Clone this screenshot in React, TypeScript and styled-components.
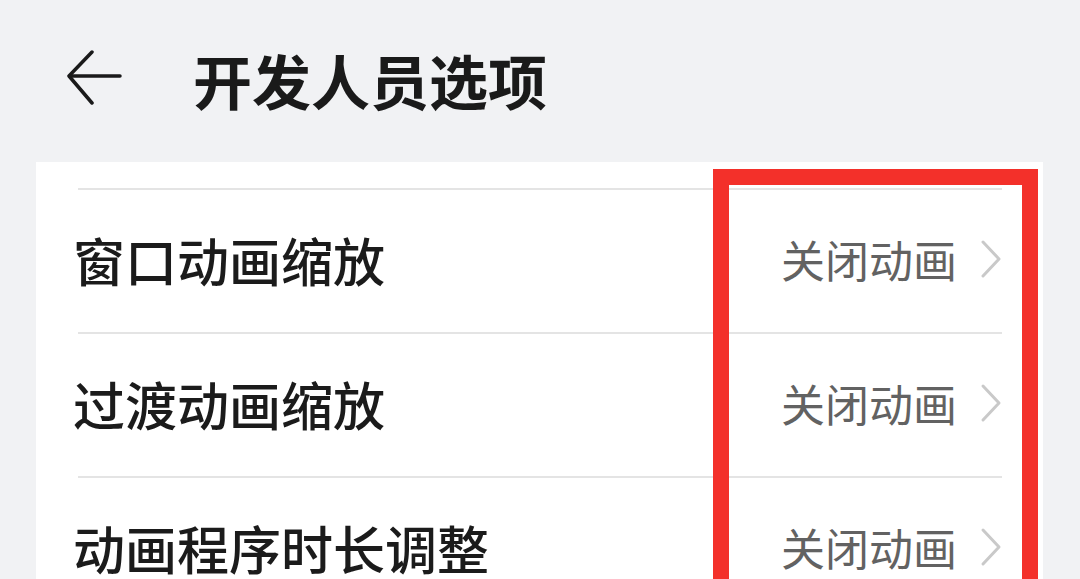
import { FC } from 'react'
import styled, { createGlobalStyle } from 'styled-components'

const GlobalStyle = createGlobalStyle`
  html, body {
    margin: 0;
    padding: 0;
    background: #f1f2f4;
  }
  body {
    font-family: "Noto Sans CJK SC", "Noto Sans", sans-serif;
  }
`

const Page = styled.div`
  position: relative;
  width: 1080px;
  height: 579px;
  overflow: hidden;
  background: #f1f2f4;
`

const Header = styled.header`
  height: 162px;
  display: flex;
  align-items: center;
  padding-left: 67px;
  box-sizing: border-box;
`

const BackButton = styled.svg`
  width: 56px;
  height: 60px;
  flex-shrink: 0;
  margin-top: -2px;
`

const Title = styled.h1`
  margin: -4px 0 0 70px;
  font-size: 59px;
  font-weight: 700;
  line-height: 1;
  color: #1a1a1a;
`

const Card = styled.section`
  margin: 0 37px 0 36px;
  padding: 26px 41px 0 42px;
  background: #fff;
`

const Row = styled.div`
  height: 144px;
  display: flex;
  align-items: center;
  border-top: 2px solid #e4e4e4;
  box-sizing: border-box;
`

const Label = styled.span`
  flex: 1;
  margin-left: -5px;
  margin-top: -2px;
  font-size: 52px;
  font-weight: 500;
  color: #1b1b1b;
  line-height: 1;
`

const Value = styled.span`
  font-size: 44px;
  color: #626262;
  line-height: 1;
  margin-top: -4px;
`

const Chevron = styled.svg`
  width: 22px;
  height: 40px;
  margin-left: 23px;
  margin-top: -4px;
`

const Highlight = styled.div`
  position: absolute;
  left: 713px;
  top: 169px;
  width: 325px;
  height: 500px;
  border: 16px solid #f3302a;
  box-sizing: border-box;
`

const rows = ['窗口动画缩放', '过渡动画缩放', '动画程序时长调整']

const App: FC = () => {
  return (
    <Page>
      <GlobalStyle />
      <Header>
        <BackButton viewBox="0 0 56 60" fill="none" stroke="#1a1a1a" strokeWidth="3.5" strokeLinecap="round" strokeLinejoin="round">
          <path d="M25 2 L2 26 L25 53" />
          <path d="M3 26 H53" />
        </BackButton>
        <Title>开发人员选项</Title>
      </Header>
      <Card>
        {rows.map((label) => (
          <Row key={label}>
            <Label>{label}</Label>
            <Value>关闭动画</Value>
            <Chevron viewBox="0 0 22 40" fill="none" stroke="#c9c9c9" strokeWidth="3" strokeLinecap="round" strokeLinejoin="round">
              <path d="M3 3 L19 20 L3 37" />
            </Chevron>
          </Row>
        ))}
      </Card>
      <Highlight />
    </Page>
  )
}

export default App
